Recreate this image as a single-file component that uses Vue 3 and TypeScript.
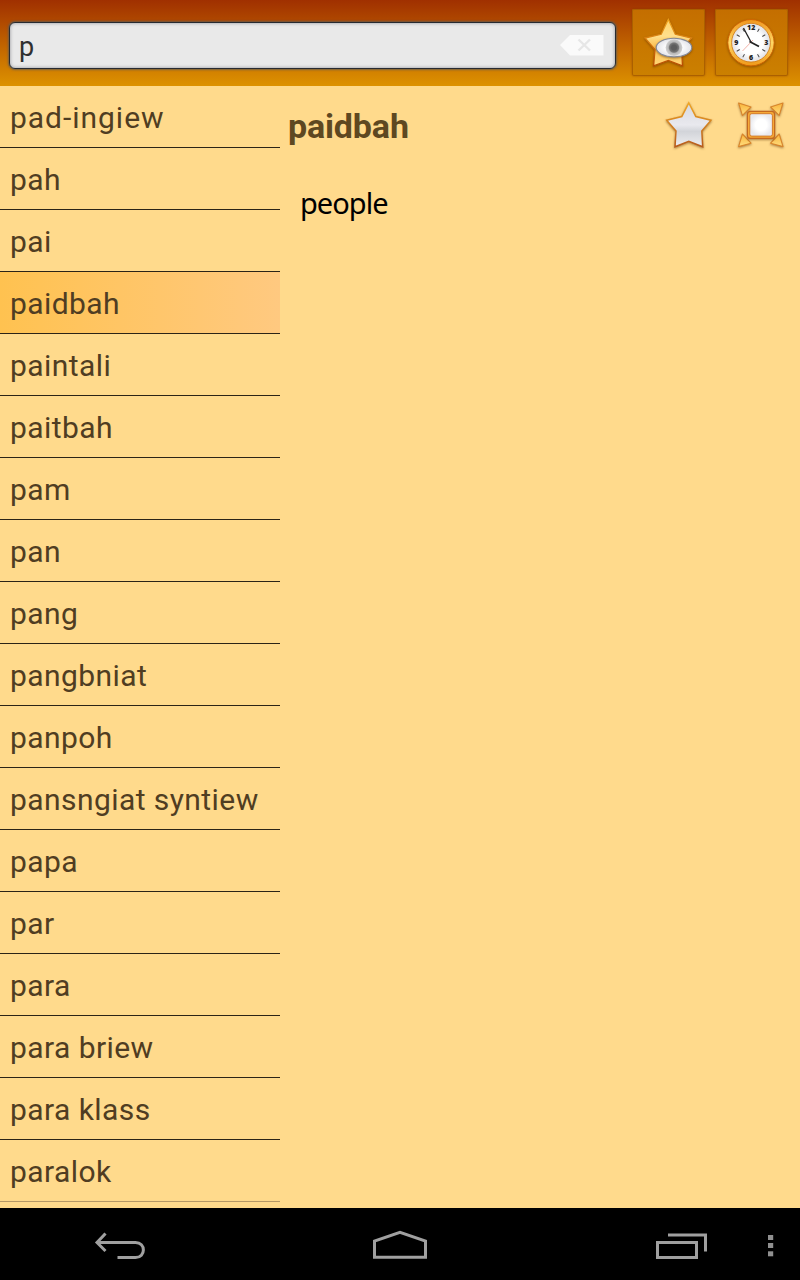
<script setup lang="ts">
import { ref } from 'vue'

const query = ref<string>('p')
const selected = ref<string>('paidbah')
const words: string[] = [
  'pad-ingiew', 'pah', 'pai', 'paidbah', 'paintali', 'paitbah', 'pam', 'pan', 'pang',
  'pangbniat', 'panpoh', 'pansngiat syntiew', 'papa', 'par', 'para', 'para briew',
  'para klass', 'paralok',
]
const ticks: number[] = [30, 60, 120, 150, 210, 240, 300, 330]
</script>

<template>
  <div class="screen">
    <header class="bar">
      <div class="search">
        <input v-model="query" class="field" type="text" aria-label="Search" />
        <svg class="clear" width="44" height="22" viewBox="0 0 44 22">
          <path d="M0 11 L10 1 H43.5 V21.5 H10 Z" fill="#fafafa" />
          <path d="M18.5 5.5 L30 16.5 M30 5.5 L18.5 16.5" stroke="#e6e6e6" stroke-width="2.4" />
        </svg>
      </div>
      <button class="tool" aria-label="Favourites">
        <svg width="73" height="66" viewBox="632 9 73 66">
          <defs>
            <linearGradient id="gold" x1="0" y1="0" x2="0" y2="1">
              <stop offset="0" stop-color="#ffd368" /><stop offset=".35" stop-color="#ffdf8c" />
              <stop offset=".6" stop-color="#fdbf50" /><stop offset="1" stop-color="#ffd675" />
            </linearGradient>
            <linearGradient id="rim" x1="0" y1="0" x2="0" y2="1">
              <stop offset="0" stop-color="#eea31d" /><stop offset="1" stop-color="#b94b00" />
            </linearGradient>
            <radialGradient id="eye"><stop offset=".4" stop-color="#fff" /><stop offset="1" stop-color="#e2e3e8" /></radialGradient>
            <radialGradient id="iris"><stop offset=".3" stop-color="#5d5d5d" /><stop offset=".55" stop-color="#777" /><stop offset=".68" stop-color="#b8b8b8" /><stop offset="1" stop-color="#d0d0d0" /></radialGradient>
          </defs>
          <path class="shade" d="M668.3 18.5 L675.3 33.3 L691.5 37 L681.6 48.5 L682.5 64.9 L668.3 59.4 L653.6 64.9 L655 48.5 L645 37 L661.2 33.3Z" fill="url(#gold)" stroke="url(#rim)" stroke-width="1.3" />
          <ellipse class="shade" cx="674" cy="46.6" rx="17.8" ry="9.3" fill="url(#eye)" stroke="#858995" stroke-width="1.1" />
          <circle cx="674" cy="46.6" r="8.4" fill="url(#iris)" />
        </svg>
      </button>
      <button class="tool" aria-label="History">
        <svg width="73" height="66" viewBox="715 9 73 66">
          <defs>
            <linearGradient id="ring" x1="0" y1="0" x2="0" y2="1">
              <stop offset="0" stop-color="#f0951c" /><stop offset=".5" stop-color="#ffd865" /><stop offset="1" stop-color="#ef9818" />
            </linearGradient>
            <radialGradient id="face"><stop offset=".6" stop-color="#fff" /><stop offset="1" stop-color="#dfe0e5" /></radialGradient>
          </defs>
          <circle class="shade" cx="751" cy="41.7" r="23.2" fill="url(#ring)" stroke="#ce6500" stroke-width="1" />
          <circle cx="751" cy="41.7" r="19.4" fill="url(#face)" stroke="#d58018" stroke-width=".9" />
          <path v-for="a in ticks" :key="a" d="M751 25.5 V29" stroke="#444" stroke-width=".9" :transform="`rotate(${a} 751 42)`" />
          <g class="digits" text-anchor="middle">
            <text x="751.2" y="29.3">12</text><text x="766.3" y="44.2">3</text>
            <text x="751" y="59.2">6</text><text x="736.3" y="44.2">9</text>
          </g>
          <path d="M753 39 L742.5 50" stroke="#f0a093" stroke-width=".8" />
          <path d="M751.5 42 L743.5 27" stroke="#222" stroke-width="1.3" />
          <path d="M749.5 40.4 L759 45.6" stroke="#222" stroke-width="1.7" />
        </svg>
      </button>
    </header>

    <main class="content">
      <ul class="words">
        <li v-for="w in words" :key="w" :class="{ active: w === selected, hyphenated: w.includes('-') }" @click="selected = w">{{ w }}</li>
      </ul>
      <section class="entry">
        <div class="heading">
          <h1>{{ selected }}</h1>
          <svg width="140" height="70" viewBox="650 90 140 70">
            <defs>
              <linearGradient id="silver" x1="0" y1="0" x2="0" y2="1">
                <stop offset="0" stop-color="#d7d8df" /><stop offset=".5" stop-color="#e9e9ee" />
                <stop offset=".65" stop-color="#d2d4d9" /><stop offset="1" stop-color="#eeeef0" />
              </linearGradient>
              <radialGradient id="pane"><stop offset=".5" stop-color="#fff" /><stop offset="1" stop-color="#e8e9ee" /></radialGradient>
              <linearGradient id="edge" x1="0" y1="0" x2="0" y2="1">
                <stop offset="0" stop-color="#f0a522" /><stop offset="1" stop-color="#b75b1c" />
              </linearGradient>
              <linearGradient id="tip" x1="0" y1="0" x2="0" y2="1">
                <stop offset="0" stop-color="#f9b53a" /><stop offset="1" stop-color="#ffdd80" />
              </linearGradient>
            </defs>
            <path class="shade" d="M688.8 103 L695.8 116.6 L711 120.3 L701.8 131 L702.7 146.8 L688.8 141.2 L675 146.8 L676 131 L666.7 120.3 L681.8 116.6Z" fill="url(#silver)" stroke="url(#edge)" stroke-width="1.5" />
            <g class="shade" fill="url(#tip)" stroke="#d9852b" stroke-width="1.1" stroke-linejoin="round">
              <path d="M738.6 103 L751 107 L742.4 115.4Z" /><path d="M783 103 L770.6 107 L779.2 115.4Z" />
              <path d="M738.6 146.6 L742.4 134 L751 143.2Z" /><path d="M783 146.6 L779.2 134 L770.6 143.2Z" />
            </g>
            <rect class="shade" x="747.4" y="111.4" width="27.2" height="27" rx="3" fill="#f5a937" stroke="#c4681f" stroke-width="1.2" />
            <rect x="749.8" y="113.7" width="22.6" height="22.4" rx="2" fill="url(#pane)" stroke="#d17522" stroke-width=".9" />
          </svg>
        </div>
        <p>people</p>
      </section>
    </main>

    <nav class="system">
      <svg width="800" height="72" viewBox="0 1208 800 72" fill="none" stroke="#a0a0a0" stroke-width="3">
        <path d="M97 1242.5 H135.5 C146 1242.5 146 1257.5 135.5 1257.5 H117.5" />
        <path d="M105.5 1233.5 L97 1242.5 L105.5 1251" />
        <path d="M374.5 1257.3 V1241 L400 1232.3 L425.5 1241 V1257.3Z" />
        <rect x="657.5" y="1242.5" width="39" height="15" />
        <path d="M668 1235 H705.5 V1251.5" />
        <g fill="#909090" stroke="none">
          <rect x="768" y="1235" width="5.2" height="5" /><rect x="768" y="1243" width="5.2" height="5" /><rect x="768" y="1251.3" width="5.2" height="5" />
        </g>
      </svg>
    </nav>
  </div>
</template>

<style>
body { margin: 0; overflow: hidden; }
</style>

<style scoped>
.screen { width: 800px; height: 1280px; display: flex; flex-direction: column; overflow: hidden; background: #ffda8c; font-family: Roboto, "Liberation Sans", sans-serif; }
.bar { height: 86px; box-sizing: border-box; padding: 9px 12px 0 9px; display: flex; align-items: flex-start; background: linear-gradient(#a03000, #dd9200); }
.search { box-sizing: border-box; width: 607px; height: 47px; margin: 13px 16px 0 0; padding: 0 11px 0 9px; display: flex; align-items: center; border: 1px solid #272b31; border-radius: 6px; background: #e9e9e9; box-shadow: 0 0 2px 1px rgba(95, 90, 80, .8), inset 0 0 3px 1px #b5b5b8; }
.field { flex: 1; min-width: 0; border: 0; outline: 0; padding: 2px 0 0; background: transparent; color: #303030; font: 27px Roboto, sans-serif; }
.clear { margin-bottom: 1px; }
.tool { width: 73px; height: 67px; padding: 0; margin-right: 10px; border: 0; border-radius: 2px; background: linear-gradient(#c46e00, #cb8000); box-shadow: inset 0 0 0 1px #ab6000, 0 0 2px rgba(120, 55, 0, .6); flex: none; }
.tool:last-child { margin-right: 0; }
.tool svg { display: block; }
.shade { filter: drop-shadow(0 1px 1px rgba(90, 45, 0, .5)); }
.digits { font: 900 7px "Open Sans", sans-serif; fill: #222; }
.content { flex: 1; display: flex; min-height: 0; }
.words { width: 280px; margin: 0; padding: 0; list-style: none; }
.words li { box-sizing: border-box; height: 62px; padding: 1px 0 0 10px; border-bottom: 1px solid #2b2316; line-height: 61px; font-size: 30px; letter-spacing: .43px; color: #503d22; white-space: nowrap; }
.words .hyphenated { letter-spacing: .97px; }
.words li:last-child { border-color: #b69966; }
.words .active { background: linear-gradient(90deg, #ffc250, #ffc980); }
.entry { flex: 1; }
.heading { display: flex; justify-content: space-between; padding: 4px 10px 0 8px; }
h1 { margin: 0; height: 74px; font-size: 34px; line-height: 72px; letter-spacing: -.15px; font-weight: 700; color: #5e4821; }
p { margin: 16px 0 0 20px; font: 29px/46px "Noto Sans", "Open Sans", sans-serif; letter-spacing: -.98px; color: #000; }
.system { height: 72px; background: #000; }
.system svg { display: block; }
</style>
